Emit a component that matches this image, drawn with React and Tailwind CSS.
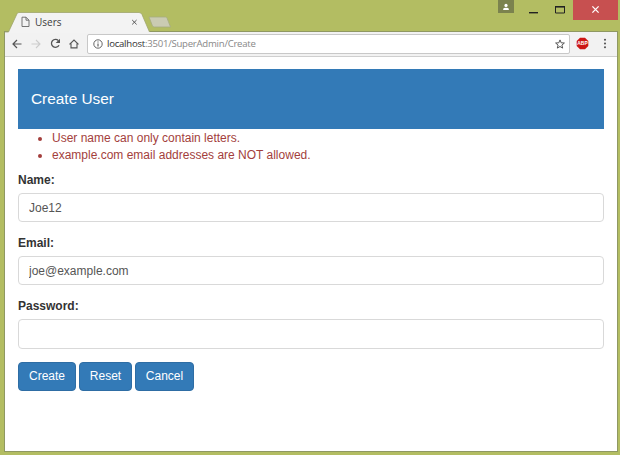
import React from 'react';

function TitleBar() {
  return (
    <header className="relative flex h-8 shrink-0 items-start">
      <div className="relative mt-3 ml-[5px] h-[21px] w-[146px] shrink-0">
        <svg className="absolute inset-0" width="146" height="21" viewBox="0 0 146 21">
          <path d="M0 20 H3.5 L12 1.8 Q12.7 0.5 14 0.5 H134 Q136 0.5 137 2.5 L144.5 20 V21 H0Z" fill="#f3f3f3" />
          <path d="M0 20 H3.5 L12 1.8 Q12.7 0.5 14 0.5 H134 Q136 0.5 137 2.5 L144.5 20" fill="none" stroke="#a0a66c" strokeWidth="0.8" />
        </svg>
        <div className="relative flex h-5 items-center pl-4">
          <svg width="9" height="12" viewBox="0 0 9 12" fill="none" stroke="#666" strokeWidth="0.9">
            <path d="M1 1.2 H5 L8 4.2 V10.5 H1Z M5 1.2 V4.2 H8" />
          </svg>
          <span className="ml-[5px] w-[96px] text-[10px] leading-[14px] text-[#3c3c3c]">Users</span>
          <svg width="7" height="7" viewBox="0 0 7 7" stroke="#555" strokeWidth="1">
            <path d="M1.2 1 L5.6 5.4 M5.6 1 L1.2 5.4" />
          </svg>
        </div>
      </div>
      <svg className="mt-4 -ml-[3px]" width="25" height="13" viewBox="0 0 25 13">
        <path d="M1 1 H17.5 Q18.5 1 19 2 L22.5 11 H6.5 Q5 11 4.5 10Z" fill="#cacbb2" stroke="#a6ac80" strokeWidth="0.8" />
      </svg>
      <div className="ml-auto flex items-start">
        <div className="flex h-[13px] w-4 items-center justify-center bg-[#7b824e]">
          <svg width="8" height="8" viewBox="0 0 8 8" fill="#fff">
            <circle cx="4" cy="2.4" r="1.6" />
            <path d="M1.2 7 V6 Q1.2 4.7 4 4.7 T6.8 6 V7Z" />
          </svg>
        </div>
        <svg className="ml-[15px]" width="9" height="20" viewBox="0 0 9 20">
          <rect x="0" y="12" width="9" height="1.4" fill="#222" />
        </svg>
        <svg className="ml-[17px]" width="10" height="20" viewBox="0 0 10 20">
          <path d="M0.5 6.8 H9.5 V13 H0.5Z" fill="none" stroke="#222" />
          <path d="M0 6.7 H10" stroke="#222" strokeWidth="1.4" />
        </svg>
        <div className="mr-[2px] ml-2 flex h-5 w-[45px] items-center justify-center bg-[#c75050]">
          <svg className="-mt-px" width="9" height="9" viewBox="0 0 9 9" stroke="#fff" strokeWidth="1.3">
            <path d="M1.4 1.4 L7.6 7.6 M7.6 1.4 L1.4 7.6" />
          </svg>
        </div>
      </div>
    </header>
  );
}

function Toolbar() {
  return (
    <div className="flex h-[25px] shrink-0 items-center border-b border-[#cfcfcf] bg-[#f2f2f2] pb-px pl-[7px]">
      <svg width="10" height="10" viewBox="0 0 10 10" fill="none" stroke="#555" strokeWidth="1.2">
        <path d="M9.5 5 H1.2 M5 1 L1 5 L5 9" />
      </svg>
      <svg className="ml-[9px]" width="10" height="10" viewBox="0 0 10 10" fill="none" stroke="#ccc" strokeWidth="1.1">
        <path d="M0.5 5 H8.8 M5 1 L9 5 L5 9" />
      </svg>
      <svg className="ml-[9px]" width="11" height="11" viewBox="0 0 11 11">
        <path d="M9 7.2 A4 4 0 1 1 8.4 2.6" fill="none" stroke="#555" strokeWidth="1.3" />
        <path d="M10 0.7 V5 H5.7Z" fill="#555" />
      </svg>
      <svg className="ml-[8px]" width="10" height="10" viewBox="0 0 10 10" fill="none" stroke="#555" strokeWidth="1.1">
        <path d="M0.5 5.3 L5 1 L9.5 5.3 M2 4.5 V8.9 H8 V4.5" />
      </svg>
      <div className="ml-2 flex h-5 w-[483px] items-center rounded-[2px] border border-[#c8c8c8] bg-white pl-[5px]">
        <svg width="10" height="10" viewBox="0 0 10 10">
          <circle cx="5" cy="5" r="4.2" fill="none" stroke="#555" strokeWidth="0.9" />
          <path d="M5 4.4 V7.4 M5 2.5 V3.6" stroke="#555" strokeWidth="1.1" />
        </svg>
        <span className="ml-[4px] text-[9.6px] leading-[14px] tracking-[-0.25px] text-[#888]">
          <span className="text-[#333]">localhost</span>:3501/SuperAdmin/Create
        </span>
        <svg className="mr-1 ml-auto" width="10" height="10" viewBox="0 0 10 10" fill="none" stroke="#555" strokeWidth="1">
          <path d="M5 0.9 L6.2 3.8 L9.4 4 L6.9 6.1 L7.7 9.1 L5 7.5 L2.3 9.1 L3.1 6.1 L0.6 4 L3.8 3.8Z" />
        </svg>
      </div>
      <svg className="ml-[6px]" width="13" height="13" viewBox="0 0 13 13">
        <path d="M4 0.7 H9 L12.3 4 V9 L9 12.3 H4 L0.7 9 V4Z" fill="#cc1714" />
        <text x="6.5" y="8.3" textAnchor="middle" fontSize="4.9" fontWeight="700" fill="#fff" fontFamily="Liberation Sans, sans-serif">ABP</text>
      </svg>
      <svg className="ml-[14px]" width="4" height="11" viewBox="0 0 4 11" fill="#555">
        <circle cx="2" cy="1.8" r="1.05" />
        <circle cx="2" cy="5.5" r="1.05" />
        <circle cx="2" cy="9.2" r="1.05" />
      </svg>
    </div>
  );
}

function Field({ label, value, type = 'text' }) {
  return (
    <label className="mb-[13px] block">
      <span className="mb-1 block leading-[17px] font-bold text-[#333]">{label}</span>
      <input
        type={type}
        defaultValue={value}
        className="block h-[29.2px] w-full rounded-[4px] border border-[#d9d9d9] bg-white px-[10px] text-[#555] outline-none"
      />
    </label>
  );
}

function Button({ children, className }) {
  return (
    <button type="button" className={`h-[29px] rounded-[4px] border border-[#2e6da4] bg-[#337ab7] text-center text-white ${className}`}>
      {children}
    </button>
  );
}

export default function App() {
  return (
    <div className="flex h-[455px] w-[620px] flex-col overflow-hidden bg-[#b3bd62] font-['Open_Sans',sans-serif]">
      <TitleBar />
      <div className="-mt-px mr-[2px] mb-[3px] ml-1 flex grow flex-col border border-[#8f9862] bg-white">
        <Toolbar />
        <main className="pt-3 pr-[13px] pl-[13px] font-['Liberation_Sans',Arial,sans-serif] text-[12px] leading-[17px]">
          <h1 className="flex h-[60px] items-center bg-[#337ab7] pb-px pl-[13px] text-[15.4px] text-white">Create User</h1>
          <ul className="mb-[8px] list-disc pt-px pl-[34px] text-[#a33e3c]">
            <li>User name can only contain letters.</li>
            <li>example.com email addresses are NOT allowed.</li>
          </ul>
          <form>
            <Field label="Name:" value="Joe12" />
            <Field label="Email:" value="joe@example.com" />
            <Field label="Password:" type="password" value="" />
            <div className="flex gap-[3px]">
              <Button className="w-[58px]">Create</Button>
              <Button className="w-[53px]">Reset</Button>
              <Button className="w-[59px]">Cancel</Button>
            </div>
          </form>
        </main>
      </div>
    </div>
  );
}
